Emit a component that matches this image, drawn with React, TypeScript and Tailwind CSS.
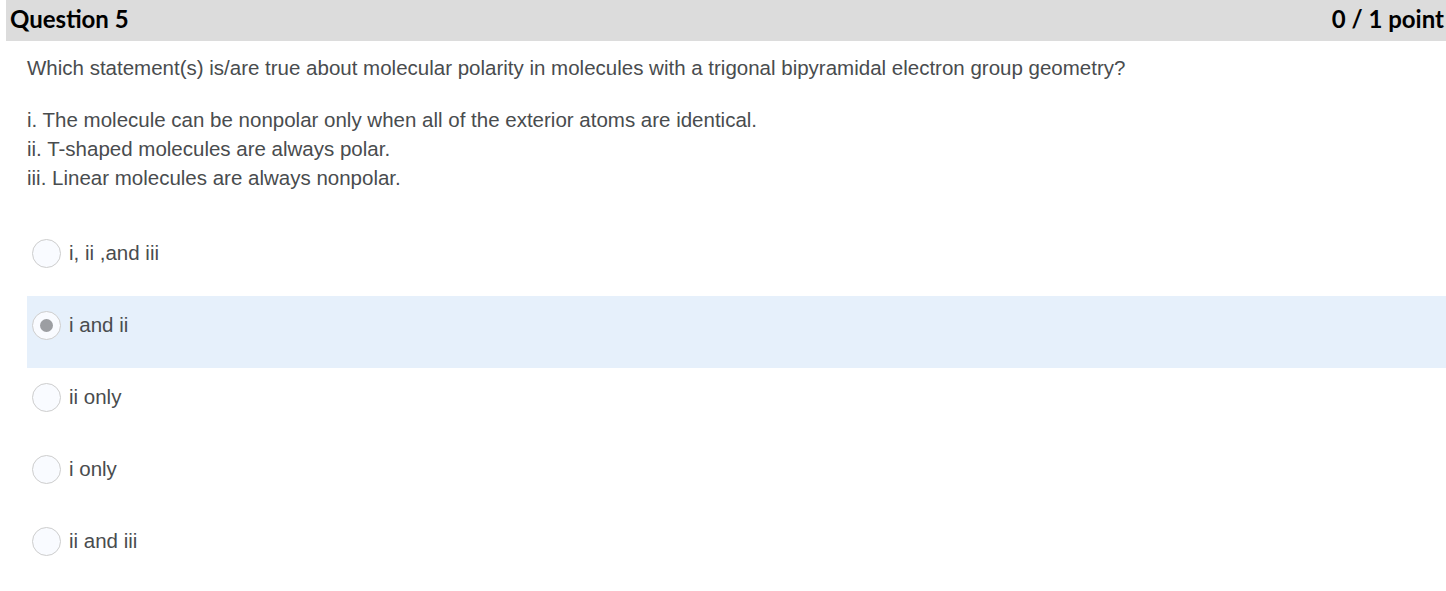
const options = ["i, ii ,and iii", "i and ii", "ii only", "i only", "ii and iii"];
const selected = 1;

function Radio({ checked }: { checked: boolean }) {
  return (
    <span className="flex h-[29px] w-[29px] shrink-0 items-center justify-center rounded-full border border-[#cdcdcd] bg-[#f9fbff]">
      {checked && <span className="h-[13px] w-[13px] rounded-full bg-[#9c9ea2]" />}
    </span>
  );
}

export default function App() {
  return (
    <div className="min-h-[591px] w-[1446px] bg-white font-['Liberation_Sans',Arial,sans-serif] text-[#494c4e]">
      <div className="ml-[6px] flex h-[41px] items-start justify-between bg-[#dcdcdc] pl-[4px] pr-[2px] pt-[4px] font-['Lato',sans-serif] text-[24px] font-bold leading-[30px] text-black">
        <span>Question 5</span>
        <span>0 / 1 point</span>
      </div>
      <div className="pl-[27px]">
        <p className="mt-[12px] text-[20.5px] leading-[29px]">
          Which statement(s) is/are true about molecular polarity in molecules with a trigonal bipyramidal electron group geometry?
        </p>
        <div className="mt-[23px] text-[20.5px] leading-[29px]">
          <p>i. The molecule can be nonpolar only when all of the exterior atoms are identical.</p>
          <p>ii. T-shaped molecules are always polar.</p>
          <p>iii. Linear molecules are always nonpolar.</p>
        </div>
        <div className="mt-[32px] flex flex-col">
          {options.map((o, i) => (
            <div
              key={o}
              className={`flex h-[72px] items-start pl-[5px] pt-[15px] text-[20.5px] ${i === selected ? "bg-[#e6f0fb]" : ""}`}
            >
              <div className="flex h-[29px] items-center gap-[8px]">
                <Radio checked={i === selected} />
                <span>{o}</span>
              </div>
            </div>
          ))}
        </div>
      </div>
    </div>
  );
}
